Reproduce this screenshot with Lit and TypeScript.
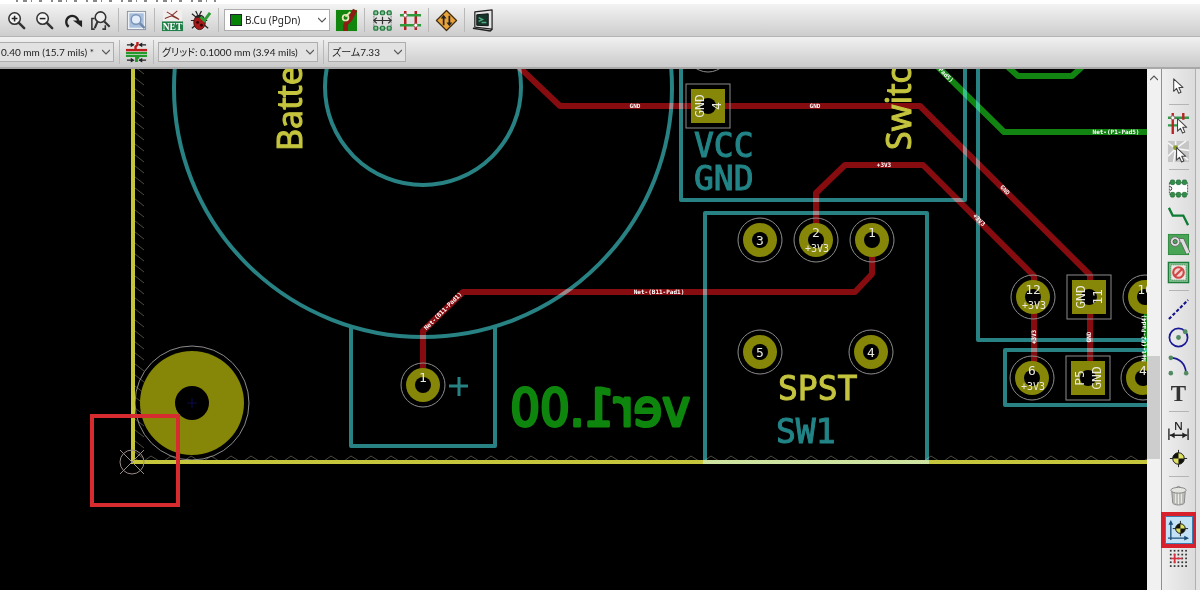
import { LitElement, html, svg, css, type TemplateResult } from "lit";
import { customElement } from "lit/decorators.js";

type Glyph = TemplateResult | ReturnType<typeof svg>;

const magnifier = svg`
  <circle cx="10" cy="10" r="6" fill="#f4f4f4" stroke="#333" stroke-width="1.6"/>
  <path d="M14.5 14.5l5.5 5.5" stroke="#333" stroke-width="2.6" stroke-linecap="round"/>`;

const target = (x: number, y: number, r: number) => svg`
  <g transform="translate(${x} ${y})">
    <path d="M${-r - 3} 0H${r + 3}M0 ${-r - 3}V${r + 3}" stroke="#222" stroke-width="1"/>
    <circle r=${r} fill="#e0e060" stroke="#111"/>
    <path d="M0 0V${-r}A${r} ${r} 0 0 0 ${-r} 0ZM0 0V${r}A${r} ${r} 0 0 0 ${r} 0Z" fill="#111"/>
  </g>`;

const cursor = (x: number, y: number) => svg`
  <path transform="translate(${x} ${y})" d="M0 0v13l3-3 2.200 5 2.400-1-2.200-5h4.200z" fill="#fff" stroke="#444" stroke-width="1.100" stroke-linejoin="round"/>`;

const footprint = svg`
  <rect x="2.500" y="6" width="19" height="12" fill="#fff" stroke="#555" stroke-dasharray="2 1"/>
  <path d="M3 10a2 2 0 0 1 0 4" fill="none" stroke="#333"/>
  <g fill="#2f8f48" stroke="#14602a" stroke-width=".6">
    ${[3.500, 9.750, 16].map((x) => svg`<rect x=${x} y="3" width="4.500" height="5" rx="1.500"/><rect x=${x} y="16" width="4.500" height="5" rx="1.500"/>`)}
  </g>`;

const icons: Record<string, Glyph> = {
  zoomIn: svg`${magnifier}<path d="M7 10h6M10 7v6" stroke="#222" stroke-width="1.600"/>`,
  zoomOut: svg`${magnifier}<path d="M7 10h6" stroke="#222" stroke-width="1.600"/>`,
  redraw: svg`<path d="M8 18.500a6.300 6.300 0 1 1 10-6" fill="none" stroke="#222" stroke-width="2.400"/><path d="M12.500 12H22v7z" fill="#222"/>`,
  fit: svg`<path d="M6 10H3v11h3M14 21h3v-4" fill="none" stroke="#333" stroke-width="1.600"/>
    <circle cx="12" cy="8.500" r="5.500" fill="#eee" stroke="#333" stroke-width="1.600"/>
    <path d="M9 13l-3 7M16 13l5.500 5.500" stroke="#333" stroke-width="2.200"/>`,
  find: svg`<rect x="2.500" y="2.500" width="19" height="19" fill="#eef1f6" stroke="#8a93a0"/>
    <rect x="4.500" y="4.500" width="15" height="15" fill="#a9bfde"/>
    <circle cx="11.500" cy="11" r="5" fill="#e4eefa" stroke="#7b93b4" stroke-width="1.500"/>
    <path d="M15.500 15l5 5" stroke="#7089aa" stroke-width="2.400"/>`,
  net: svg`<rect x="2" y="1" width="20" height="12" fill="#f2eeee"/>
    <path d="M4 10l7-3 8 4M6 3l12 7M10 8l7-6" fill="none" stroke="#84302c" stroke-width="1.100"/>
    <rect x="1" y="13" width="22" height="10" fill="#1f7f46"/>
    <text x="12" y="21.500" text-anchor="middle" font-family="Liberation Serif" font-size="10" font-weight="700" fill="#fff">NET</text>`,
  drc: svg`<path d="M3 5l5 4M2 12h5M3 20l5-4M13 2l-2 4M7 2l2 4M20 20l-5-4M19 12h-4" stroke="#222" stroke-width="1.300"/>
    <ellipse cx="11" cy="14" rx="6" ry="7.500" fill="#a81818" stroke="#501010"/>
    <path d="M6 9a5.500 5 0 0 1 10 0z" fill="#222"/><circle cx="9" cy="14" r="1.500" fill="#300"/><circle cx="13" cy="17" r="1.500" fill="#300"/>
    <path d="M12 8l4 4 6-8" fill="none" stroke="#2c9c34" stroke-width="3"/>`,
  layerPair: svg`<rect x="1" y="1" width="22" height="22" fill="#12850f"/>
    <path d="M11 23v-6c0-3 3-4 5-7l5-9" fill="none" stroke="#8c1d14" stroke-width="5"/>
    <circle cx="11" cy="9" r="3" fill="#12850f" stroke="#e6e6b8" stroke-width="1.800"/><path d="M11 8l5-5" stroke="#e6e6b8" stroke-width="1.800"/>`,
  modeFootprint: svg`<rect x="3" y="4" width="18" height="16" fill="none" stroke="#777" stroke-dasharray="2 1"/>
    <g fill="#8cc49c" stroke="#1f7a3c" stroke-width="1.300">
      ${[3, 10, 17].map((x) => svg`<rect x=${x} y="2" width="4" height="4" rx="1"/><rect x=${x} y="18" width="4" height="4" rx="1"/>`)}
    </g><path d="M3 12h18M12 8v8M6 9l-3 3 3 3M18 9l3 3-3 3" fill="none" stroke="#333" stroke-width="1.300"/>`,
  modeTrack: svg`<path d="M6.500 2v20M17.500 2v20" stroke="#b02020" stroke-width="2.600"/><path d="M1 6.500h22M1 17h22" stroke="#2f9a3a" stroke-width="2.600"/>
    <circle cx="6.500" cy="6.500" r="2" fill="#fff" stroke="#966"/><circle cx="17.500" cy="17" r="2" fill="#fff" stroke="#966"/>`,
  router: svg`<path d="M12 1.500L22.500 12 12 22.500 1.500 12z" fill="#e9a33a" stroke="#3f2c10" stroke-width="1.300" stroke-linejoin="round"/>
    <path d="M9 17V9M15 7v8" stroke="#222" stroke-width="1.800"/><path d="M6 10l3-4 3 4zM12 14l3 4 3-4z" fill="#222"/>`,
  console: svg`<path d="M4 3L22 1v20L4 19z" fill="#e4e4e4" stroke="#222" stroke-width="1.300" stroke-linejoin="round"/><path d="M2 20l18 3 2-2" fill="none" stroke="#222" stroke-width="1.500"/>
    <path d="M6 6l12-1v12.500L6 17z" fill="#15352b" stroke="#111"/><path d="M8 9l4 2-4 2M11 14h5" fill="none" stroke="#4fae80" stroke-width="1.500"/>`,
  trackWidth: svg`<path d="M1 9.500h22" stroke="#c01c1c" stroke-width="2.500"/><path d="M1 12.500h22M1 15.500h22" stroke="#249a2c" stroke-width="2.200"/>
    <path d="M13 1v3l-2 2v3" fill="none" stroke="#c01c1c" stroke-width="2.500"/><path d="M15 17h-3v5" fill="none" stroke="#249a2c" stroke-width="3"/>
    <path d="M2 4h7M15 4h7M2 20h6M15 20h7" stroke="#222" stroke-width="1.200"/><path d="M6 1.500L10 4 6 6.500zM18 1.500L14 4l4 2.500zM6 17.500l4 2.500-4 2.500zM18 17.500L14 20l4 2.500z" fill="#222"/>`,
  select: svg`${cursor(7, 4)}`,
  highlight: svg`<path d="M1 6h22M1 14h10" stroke="#2f9a4a" stroke-width="2.500"/><path d="M6 1v22M17 1v7" stroke="#b82424" stroke-width="2.500"/>
    <circle cx="6" cy="6" r="2" fill="#fff" stroke="#966"/>${cursor(11, 7)}`,
  ratsnest: svg`<rect x="1" y="1" width="22" height="22" fill="#c6c6c6"/><path d="M9 9L1 3M9 9V1M9 9l11-8M9 9l14 2M9 9L1 17M9 9l-2 14M9 9l13 12" stroke="#f6f6f6" stroke-width="1.600"/>
    <circle cx="9" cy="8" r="2.600" fill="#8a9a28"/>${cursor(10, 8)}`,
  footprint,
  track: svg`<path d="M2 3l4 8h11l5 10" fill="none" stroke="#0f7c34" stroke-width="2.400"/>`,
  zone: svg`<rect x="1.500" y="1.500" width="21" height="21" fill="#4aa456" stroke="#2c8a3c"/>
    <path d="M9 8h7l6 13" fill="none" stroke="#666" stroke-width="5"/><path d="M9 8h7l6 13" fill="none" stroke="#ddd" stroke-width="3.500"/>
    <circle cx="8.500" cy="9" r="5" fill="#ddd" stroke="#666"/><circle cx="8.500" cy="9" r="2.200" fill="#4aa456" stroke="#555"/>`,
  keepout: svg`<rect x="1.500" y="1.500" width="21" height="21" fill="#8cc498" stroke="#1d7c3a" stroke-width="1.500"/>
    <rect x="4" y="4" width="16" height="16" fill="#eee8e4" stroke="#1d7c3a" stroke-dasharray="1 1"/>
    <circle cx="12" cy="12" r="5.500" fill="#f2d4d0" stroke="#cf4848" stroke-width="2.200"/><path d="M8 8l8 8" stroke="#cf4848" stroke-width="2.200" transform="rotate(90 12 12)"/>`,
  line: svg`<path d="M2 22L22 2" stroke="#12128a" stroke-width="2.200" stroke-dasharray="3.500 2"/>`,
  circle: svg`<circle cx="12" cy="12" r="9.500" fill="none" stroke="#1a1a96" stroke-width="1.800"/><circle cx="12" cy="12" r="2.500" fill="#528a64"/><circle cx="19" cy="6" r="2.500" fill="#528a64"/>`,
  arc: svg`<path d="M4 4c9 0 15 6 16 16" fill="none" stroke="#1a1a96" stroke-width="1.800"/><circle cx="4" cy="4" r="2.400" fill="#528a64"/><circle cx="4" cy="20" r="2.400" fill="#528a64"/><circle cx="20" cy="20" r="2.400" fill="#528a64"/>`,
  text: svg`<text x="12" y="20" text-anchor="middle" font-family="Liberation Serif" font-size="24" font-weight="700" fill="#333">T</text>`,
  dimension: svg`<path d="M2 10v12M22 10v12M3 17h18" stroke="#222" stroke-width="1.400"/><path d="M3 17l5-3v6zM21 17l-5-3v6z" fill="#222"/>
    <text x="12" y="11" text-anchor="middle" font-family="Noto Sans" font-size="12" font-weight="500" fill="#222">N</text>`,
  layerTarget: target(12, 12, 6),
  trash: svg`<path d="M5 8h14l-1 12c-2 2.500-10 2.500-12 0z" fill="#bcbcb6" stroke="#888"/><path d="M9 10v10M12 10v11M15 10v10" stroke="#eee"/>
    <ellipse cx="12" cy="6.500" rx="8" ry="3" fill="#e4e4e0" stroke="#888"/><path d="M9 4q3-3 6 0" fill="none" stroke="#888"/>`,
  origin: svg`<path d="M4 3v19M1 20h20" stroke="#1d4e7a" stroke-width="1.400"/><path d="M1.500 6L4 1l2.500 5zM18 17.500l5 2.500-5 2.500z" fill="#1d4e7a"/>${target(14, 10, 5)}`,
  gridOrigin: svg`<g fill="#333">${[2, 6, 10, 14, 18].map((x) => [3, 7, 11, 15, 19].map((y) => svg`<rect x=${x + 1} y=${y} width="1.800" height="1.800"/>`))}</g>
    <path d="M4 12h12M8 7v10" stroke="#d83040" stroke-width="1.800"/>`,
};

const icon = (name: string) => html`<svg class="icon" viewBox="0 0 24 24" aria-hidden="true">${icons[name]}</svg>`;
const tool = (name: string, label: string, on = false) =>
  html`<button class="tool ${on ? "on" : ""}" type="button" aria-label=${label}>${icon(name)}</button>`;
const sep = html`<span class="sep"></span>`;
const chevron = html`<svg class="chevron" viewBox="0 0 8 6" aria-hidden="true"><path d="M0 1l4 4 4-4" fill="none" stroke="#555" stroke-width="1.200"/></svg>`;

@customElement("pcb-canvas")
export class PcbCanvas extends LitElement {
  static styles = css`
    :host { display: block; background: #000; overflow: hidden; min-width: 0; }
    .board { display: block; width: 100%; height: 100%; font-family: "DejaVu Sans Mono", monospace; }
    .silk { fill: none; stroke: #288284; stroke-width: 4; mix-blend-mode: screen; stroke-linejoin: round; }
    .edge { fill: none; stroke: #c6c63c; stroke-width: 4; }
    .front { fill: none; stroke: #860c10; stroke-width: 6; stroke-linejoin: round; }
    .back { fill: none; stroke: #128412; stroke-width: 6; stroke-linejoin: round; }
    .pad { fill: #868608; }
    .hole { fill: #000; }
    .clear { fill: none; stroke: #8c8c8c; stroke-width: 1; }
    .num { fill: #e8e8dc; font-size: 13px; text-anchor: middle; }
    .padnet { fill: #e8e8dc; font-size: 10px; text-anchor: middle; }
    .net { fill: #fff; font-size: 6px; font-weight: 700; text-anchor: middle; }
    .ref { font-size: 33px; fill: #228486; stroke: #228486; stroke-width: 1; }
    .value { font-size: 33px; fill: #c4c43e; stroke: #c4c43e; stroke-width: 1; }
    .upright { font-family: "Noto Sans", sans-serif; font-size: 34px; fill: #c4c43e; stroke: #c4c43e; stroke-width: 1; }
    .version { font-family: "DejaVu Sans Condensed", "DejaVu Sans", sans-serif; font-size: 52px; fill: #0e860e; stroke: #0e860e; stroke-width: 3; stroke-linejoin: round; }
    .mark { fill: none; stroke: #9a8c88; stroke-width: 1; }
    .callout { fill: none; stroke: #d62c30; stroke-width: 4; }
    .hatch { fill: none; stroke: #4a4a40; stroke-width: 1; }
  `;

  private roundPad(x: number, y: number, num: string, net = "", centred = false) {
    return svg`<circle class="pad" cx=${x} cy=${y} r="17"/><circle class="hole" cx=${x} cy=${y} r="8"/>
      <circle class="clear" cx=${x} cy=${y} r="22"/>
      <text class="num" x=${x} y=${centred ? y + 5 : y - 3}>${num}</text>
      ${net ? svg`<text class="padnet" x=${x + 1} y=${y + 12}>${net}</text>` : ""}`;
  }

  private squarePad(x: number, y: number, num: string, flip: boolean) {
    const left = flip ? num : "GND";
    const right = flip ? "GND" : num;
    return svg`<rect class="pad" x=${x - 17} y=${y - 17} width="34" height="34"/><circle class="hole" cx=${x} cy=${y} r="8"/>
      <rect class="clear" x=${x - 22} y=${y - 22} width="44" height="44"/>
      <text class="num" transform="translate(${x - 4} ${y}) rotate(-90)">${left}</text>
      <text class="num" transform="translate(${x + 13} ${y}) rotate(-90)">${right}</text>`;
  }

  private netLabel(x: number, y: number, angle: number, text: string) {
    return svg`<text class="net" transform="translate(${x} ${y}) rotate(${angle})" y="2">${text}</text>`;
  }

  render() {
    return html`<svg class="board" role="img" aria-label="PCB layout">
      <defs>
        <pattern id="hv" width="10" height="11" patternUnits="userSpaceOnUse" x="135"><path class="hatch" d="M0 1l9 7"/></pattern>
        <pattern id="hh" width="20" height="8" patternUnits="userSpaceOnUse" y="454"><path class="hatch" d="M4 7l7-5 8 5"/></pattern>
      </defs>
      <g transform="translate(0 -69)">
        <rect x="135" y="60" width="10" height="400" fill="url(#hv)"/>
        <rect x="135" y="454" width="2400" height="7" fill="url(#hh)"/>
        <path class="back" d="M935 64L1004 132H2400M1008 67l10 9h54l10-9M1147 297v81"/>
        <path class="front" d="M518 66l42 40H920l170 169V378M816 240V193l29-28h78l111 111V378M423 385V331l40-39H855l17-18V240"/>
        <circle class="pad" cx="192" cy="403" r="52"/><circle class="hole" cx="192" cy="403" r="17"/><circle class="clear" cx="192" cy="403" r="57"/>
        <path d="M192 398v10M187 403h10" stroke="#0a0a50"/>
        <circle class="clear" cx="708" cy="50" r="22"/>
        ${this.squarePad(708, 106, "4", false)}
        ${this.squarePad(1089, 297, "11", false)}
        ${this.squarePad(1088, 378, "P5", true)}
        ${this.roundPad(760, 240, "3", "", true)}
        ${this.roundPad(816, 240, "2", "+3V3")}
        ${this.roundPad(872, 240, "1")}
        ${this.roundPad(760, 352, "5", "", true)}
        ${this.roundPad(871, 352, "4", "", true)}
        ${this.roundPad(423, 385, "1")}
        ${this.roundPad(1033, 297, "12", "+3V3")}
        ${this.roundPad(1032, 378, "6", "+3V3")}
        ${this.roundPad(1145, 297, "10")}
        ${this.roundPad(1143, 378, "4")}
        <path class="edge" d="M133 60V462H2400"/>
        <g class="silk">
          <circle cx="423" cy="88" r="249"/><circle cx="423" cy="87" r="98"/>
          <path d="M351 327V446H495V327"/><path d="M705 464V213H927V464M705 462H927"/>
          <path d="M681 60V200H965V60"/><path d="M978 60V340H2400"/><path d="M2400 350H1005V405H2400"/>
          <path d="M449 386h19M459 377v19" stroke-width="3"/>
        </g>
        <text class="upright" transform="translate(302 151) rotate(-90)">Battery</text>
        <text class="upright" transform="translate(911 150) rotate(-90)">Switch</text>
        <text class="ref" x="694" y="157">VCC</text>
        <text class="ref" x="694" y="190">GND</text>
        <text class="value" x="778" y="400">SPST</text>
        <text class="ref" x="776" y="443">SW1</text>
        <text class="version" transform="translate(690 426) scale(-1 1)">ver1.00</text>
        ${this.netLabel(635, 106, 0, "GND")}
        ${this.netLabel(815, 106, 0, "GND")}
        ${this.netLabel(884, 165, 0, "+3V3")}
        ${this.netLabel(659, 292, 0, "Net-(B11-Pad1)")}
        ${this.netLabel(443, 311, -45, "Net-(B11-Pad1)")}
        ${this.netLabel(1005, 190, 45, "GND")}
        ${this.netLabel(979, 220, 45, "+3V3")}
        ${this.netLabel(1034, 337, -90, "+3V3")}
        ${this.netLabel(1089, 337, -90, "GND")}
        ${this.netLabel(946, 75, 45, "Pad5)")}
        ${this.netLabel(1116, 132, 0, "Net-(P1-Pad5)")}
        ${this.netLabel(1144, 338, -90, "Net-(P2-Pad4)")}
        <circle class="mark" cx="132" cy="462" r="12"/><path class="mark" d="M120 450l24 24M144 450l-24 24"/>
        <rect class="callout" x="92" y="416" width="86" height="89"/>
      </g>
    </svg>`;
  }
}

@customElement("app-root")
export class AppRoot extends LitElement {
  static styles = css`
    :host {
      display: flex; flex-direction: column; height: 100vh; overflow: hidden; background: #e4e4e4;
      font-family: "Noto Sans", "Noto Sans CJK JP", sans-serif; font-size: 10px; color: #222;
    }
    .strip { height: 4px; flex: none; background: #fff; }
    .strip svg { display: block; width: 100%; height: 4px; }
    .bar {
      display: flex; align-items: center; gap: 4px; flex: none; height: 33px; box-sizing: border-box;
      padding: 0 4px; background: linear-gradient(#f3f3f3, #cdcdcd); border-bottom: 1px solid #b4b4b4;
    }
    .bar.second {
      height: 32px; gap: 3px; padding-left: 0; background: linear-gradient(#f1f1f1, #cacaca); border-bottom: 2px solid #a8a8a8;
      font-family: Lato, "Noto Sans CJK JP", sans-serif;
    }
    .tool { width: 24px; height: 24px; flex: none; padding: 0; border: 0; background: none; display: grid; place-items: center; }
    .icon { display: block; width: 23px; height: 23px; overflow: visible; }
    .sep { flex: none; width: 4px; height: 24px; background: linear-gradient(#b9b9b9, #b9b9b9) center / 1px 100% no-repeat; }
    .combo { display: grid; grid-template-columns: 1fr 12px; align-items: center; flex: none; }
    .combo > * { grid-row: 1; }
    .combo select {
      grid-column: 1 / 3; appearance: none; margin: 0; height: 20px; width: 100%; padding: 0 12px 0 3px; border-radius: 0;
      border: 1px solid #adadad; background: #e2e2e2; font: inherit; color: #222; font-feature-settings: "palt";
    }
    .chevron { grid-column: 2; width: 8px; height: 6px; pointer-events: none; z-index: 1; }
    .layer { width: 106px; }
    .layer select { height: 22px; background: #fff; padding-left: 20px; }
    .swatch { grid-column: 1; width: 10px; height: 10px; margin-left: 6px; background: #078407; border: 1px solid #223; z-index: 1; }
    .width { width: 114px; }
    .width select { border-left: 0; padding-left: 1px; }
    .grid { width: 160px; }
    .zoom { width: 78px; }
    .main { display: grid; grid-template-columns: minmax(0, 1fr) 14px 35px 4px; flex: 1; min-height: 0; }
    .scroll { display: flex; flex-direction: column; background: #f1f1f1; }
    .up { border: 0; background: none; padding: 0; height: 17px; display: grid; place-items: center; }
    .up svg { grid-column: 1; width: 8px; height: 6px; transform: rotate(180deg); }
    .before { flex: 270; }
    .thumb { flex: 103; background: #cdcdcd; margin-right: 1px; }
    .after { flex: 131; }
    .side {
      display: flex; flex-direction: column; align-items: center; gap: 4px; padding-top: 5px; min-height: 0;
      background: linear-gradient(90deg, #eee, #dcdcdc); border-left: 1px solid #909090; border-right: 1px solid #b0b0b0;
    }
    .side .sep { width: 20px; height: 5px; background: linear-gradient(#b4b4b4, #b4b4b4) center / 100% 1px no-repeat; }
    .side .on { width: 28px; height: 28px; margin: 5px 0 -2px; background: #c4e2f6; border: 1px solid #3c7cae; outline: 4px solid #d8202c; }
    .gutter { background: #e2e2e2; }
  `;

  render() {
    return html`
      <div class="strip"><svg aria-hidden="true"><path d="M16 1h200" stroke="#888" stroke-width="2" stroke-dasharray="2 5 4 4 1 7 3 9"/></svg></div>
      <div class="bar" role="toolbar" aria-label="Main">
        ${tool("zoomIn", "Zoom in")}${tool("zoomOut", "Zoom out")}${tool("redraw", "Redraw")}${tool("fit", "Zoom to fit")}
        ${sep}${tool("find", "Find")}${sep}${tool("net", "Netlist")}${tool("drc", "Design rules check")}${sep}
        <div class="combo layer"><span class="swatch"></span><select aria-label="Layer"><option>B.Cu (PgDn)</option></select>${chevron}</div>
        ${tool("layerPair", "Layer pair")}${sep}${tool("modeFootprint", "Footprint mode")}${tool("modeTrack", "Track mode")}${sep}
        ${tool("router", "Autorouter")}${sep}${tool("console", "Scripting console")}
      </div>
      <div class="bar second" role="toolbar" aria-label="Options">
        <div class="combo width"><select aria-label="Track width"><option>0.40 mm (15.7 mils) *</option></select>${chevron}</div>
        ${sep}${tool("trackWidth", "Automatic track width")}${sep}
        <div class="combo grid"><select aria-label="Grid"><option>グリッド: 0.1000 mm (3.94 mils)</option></select>${chevron}</div>
        ${sep}
        <div class="combo zoom"><select aria-label="Zoom"><option>ズーム7.33</option></select>${chevron}</div>
      </div>
      <div class="main">
        <pcb-canvas></pcb-canvas>
        <div class="scroll">
          <button class="up" type="button" aria-label="Scroll up">${chevron}</button>
          <div class="before"></div><div class="thumb"></div><div class="after"></div>
        </div>
        <div class="side" role="toolbar" aria-label="Tools">
          ${tool("select", "Select")}${sep}${tool("highlight", "Highlight net")}${tool("ratsnest", "Local ratsnest")}${sep}
          ${tool("footprint", "Add footprint")}${tool("track", "Route track")}${tool("zone", "Add zone")}${tool("keepout", "Add keepout")}${sep}
          ${tool("line", "Draw line")}${tool("circle", "Draw circle")}${tool("arc", "Draw arc")}${tool("text", "Add text")}${sep}
          ${tool("dimension", "Add dimension")}${tool("layerTarget", "Add target")}${sep}
          ${tool("trash", "Delete")}${tool("origin", "Place origin", true)}${tool("gridOrigin", "Grid origin")}
        </div>
        <div class="gutter"></div>
      </div>`;
  }
}
